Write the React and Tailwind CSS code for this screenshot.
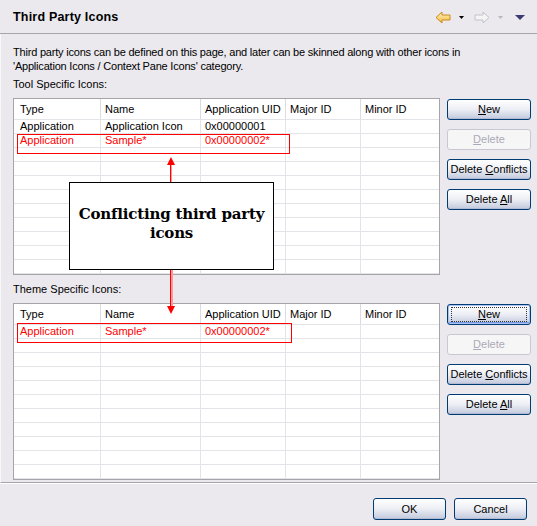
import React from 'react';

const COLS = [
  { label: 'Type', w: 'w-[87px]', pl: 'pl-[6px]' },
  { label: 'Name', w: 'w-[100px]', pl: 'pl-[4px]' },
  { label: 'Application UID', w: 'w-[85px]', pl: 'pl-[4px]' },
  { label: 'Major ID', w: 'w-[75px]', pl: 'pl-[4px]' },
  { label: 'Minor ID', w: 'w-[78px]', pl: 'pl-[4px]' },
];

function Cell({ col, children, red, last }) {
  return (
    <div
      className={`${col.w} ${col.pl} shrink-0 h-full leading-[13px] whitespace-nowrap overflow-hidden ${last ? '' : 'border-r border-[#e4e3e8]'} ${red ? 'text-[#ff0000]' : 'text-black'}`}
    >
      {children}
    </div>
  );
}

function IconTable({ rows }) {
  const blank = Array.from({ length: 11 - rows.length }, () => ({ cells: ['', '', '', '', ''] }));
  const all = [...rows, ...blank];
  return (
    <div className="w-[427px] h-[177px] border border-[#a5a4a9] bg-white flex flex-col overflow-hidden">
      <div className="h-[21px] shrink-0 flex border-b border-[#e4e3e8]">
        {COLS.map((c, i) => (
          <div
            key={c.label}
            className={`${c.w} ${c.pl} shrink-0 h-full flex items-center whitespace-nowrap ${i < 4 ? 'border-r border-[#dcdbe0]' : ''}`}
          >
            {c.label}
          </div>
        ))}
      </div>
      {all.map((r, ri) => (
        <div key={ri} className="h-[14px] shrink-0 flex border-b border-[#e4e3e8]">
          {r.cells.map((v, ci) => (
            <Cell key={ci} col={COLS[ci]} red={r.red} last={ci === 4}>
              {v}
            </Cell>
          ))}
        </div>
      ))}
    </div>
  );
}

function XPButton({ children, disabled, isDefault, w = 'w-[84px]', h = 'h-[21px]' }) {
  if (disabled) {
    return (
      <div
        className={`${w} ${h} rounded-[3px] border border-[#c9c7d2] bg-[#f6f6f7] text-[#aca9b6] flex items-center justify-center`}
      >
        {children}
      </div>
    );
  }
  return (
    <div
      className={`${w} ${h} rounded-[3px] border border-[#003c74] bg-gradient-to-b from-[#ffffff] via-[#eceef4] to-[#c2c9dd] text-black flex items-center justify-center ${isDefault ? 'shadow-[inset_0_0_0_1px_#a9c4f4,inset_0_-1px_0_1px_#7899e2]' : 'shadow-[inset_0_-1px_0_0_#b3bbd3]'}`}
    >
      {isDefault ? (
        <span className="w-[76px] h-[15px] border border-dotted border-[#333] flex items-center justify-center">
          {children}
        </span>
      ) : (
        children
      )}
    </div>
  );
}

function ButtonColumn({ isDefault }) {
  return (
    <div className="flex flex-col gap-[9px] pt-[1px]">
      <XPButton isDefault={isDefault}>
        <span><u>N</u>ew</span>
      </XPButton>
      <XPButton disabled>
        <span><u>D</u>elete</span>
      </XPButton>
      <XPButton>
        <span>Delete <u>C</u>onflicts</span>
      </XPButton>
      <XPButton>
        <span>Delete <u>A</u>ll</span>
      </XPButton>
    </div>
  );
}

function NavIcons() {
  return (
    <div className="flex items-center">
      <svg width="16" height="13" viewBox="0 0 16 13" className="mr-[8px]">
        <defs>
          <linearGradient id="bk" x1="0" y1="0" x2="0" y2="1">
            <stop offset="0" stopColor="#fff3c0" />
            <stop offset="1" stopColor="#f5b93a" />
          </linearGradient>
        </defs>
        <path d="M1 6.5 L7 1 V4 H15 V9 H7 V12 Z" fill="url(#bk)" stroke="#c98a1c" strokeWidth="1" strokeLinejoin="round" />
      </svg>
      <svg width="5" height="3" viewBox="0 0 5 3" className="mr-[10px]">
        <path d="M0 0 H5 L2.5 3 Z" fill="#000" />
      </svg>
      <svg width="16" height="13" viewBox="0 0 16 13" className="mr-[8px]">
        <path d="M15 6.5 L9 1 V4 H1 V9 H9 V12 Z" fill="#f4f4f4" stroke="#c2c2c6" strokeWidth="1" strokeLinejoin="round" />
      </svg>
      <svg width="5" height="3" viewBox="0 0 5 3" className="mr-[12px]">
        <path d="M0 0 H5 L2.5 3 Z" fill="#b8b8bc" />
      </svg>
      <svg width="10" height="5" viewBox="0 0 10 5">
        <path d="M0 0 H10 L5 5 Z" fill="#3a3a70" />
      </svg>
    </div>
  );
}

export default function App() {
  return (
    <div className="relative w-[537px] h-[526px] bg-[#ebe9ee] text-[11px] text-black font-['Liberation_Sans',Arial,sans-serif] overflow-hidden">
      <div className="h-[34px] flex items-center justify-between pl-[13px] pr-[12px] pt-[1px] border-b border-[#a6a5aa]">
        <div className="text-[12.5px] font-bold tracking-[0.2px]">Third Party Icons</div>
        <NavIcons />
      </div>

      <div className="h-[449px] border-l border-[#f8f8fa] border-b border-b-[#a6a5aa] flex flex-col pl-[12px]">
        <div className="mt-[11px] leading-[14px] tracking-[-0.2px]">
          <p>Third party icons can be defined on this page, and later can be skinned along with other icons in</p>
          <p>'Application Icons / Context Pane Icons' category.</p>
        </div>

        <div className="mt-[4px] leading-[14px]">Tool Specific Icons:</div>
        <div className="mt-[7px] flex gap-[7px]">
          <IconTable
            rows={[
              { cells: ['Application', 'Application Icon', '0x00000001', '', ''] },
              { cells: ['Application', 'Sample*', '0x00000002*', '', ''], red: true },
            ]}
          />
          <ButtonColumn />
        </div>

        <div className="mt-[7px] leading-[14px]">Theme Specific Icons:</div>
        <div className="mt-[7px] flex gap-[7px]">
          <IconTable rows={[{ cells: ['Application', 'Sample*', '0x00000002*', '', ''], red: true }]} />
          <ButtonColumn isDefault />
        </div>
      </div>

      <div className="h-[1px] bg-white" />
      <div className="flex justify-end gap-[8px] pr-[10px] pt-[14px]">
        <XPButton w="w-[73px]" h="h-[22px]">OK</XPButton>
        <XPButton w="w-[73px]" h="h-[22px]">Cancel</XPButton>
      </div>

      {/* annotation overlay */}
      <div className="absolute left-[17px] top-[134px] w-[273px] h-[20px] border border-[#ff0000]" />
      <div className="absolute left-[17px] top-[323px] w-[275px] h-[20px] border border-[#ff0000]" />

      <svg className="absolute left-[166px] top-[157px]" width="10" height="26" viewBox="0 0 10 26">
        <rect x="4" y="6" width="1" height="20" fill="#ff0000" />
        <rect x="5" y="6" width="1" height="20" fill="#ff9a9a" />
        <path d="M1 8 L5 0 L9 8 Z" fill="#ff0000" />
      </svg>

      <div className="absolute left-[69px] top-[182px] w-[205px] h-[88px] bg-white border border-black flex items-center justify-center text-center">
        <div className="font-['DejaVu_Serif',serif] font-bold text-[15px] leading-[19px] tracking-[-0.2px] pb-[4px]">
          Conflicting third party
          <br />
          icons
        </div>
      </div>

      <svg className="absolute left-[166px] top-[270px]" width="10" height="45" viewBox="0 0 10 45">
        <rect x="4" y="0" width="1" height="37" fill="#ff0000" />
        <rect x="5" y="0" width="2" height="37" fill="#ff9a9a" />
        <path d="M1 36 L5 44 L9 36 Z" fill="#ff0000" />
      </svg>
    </div>
  );
}
